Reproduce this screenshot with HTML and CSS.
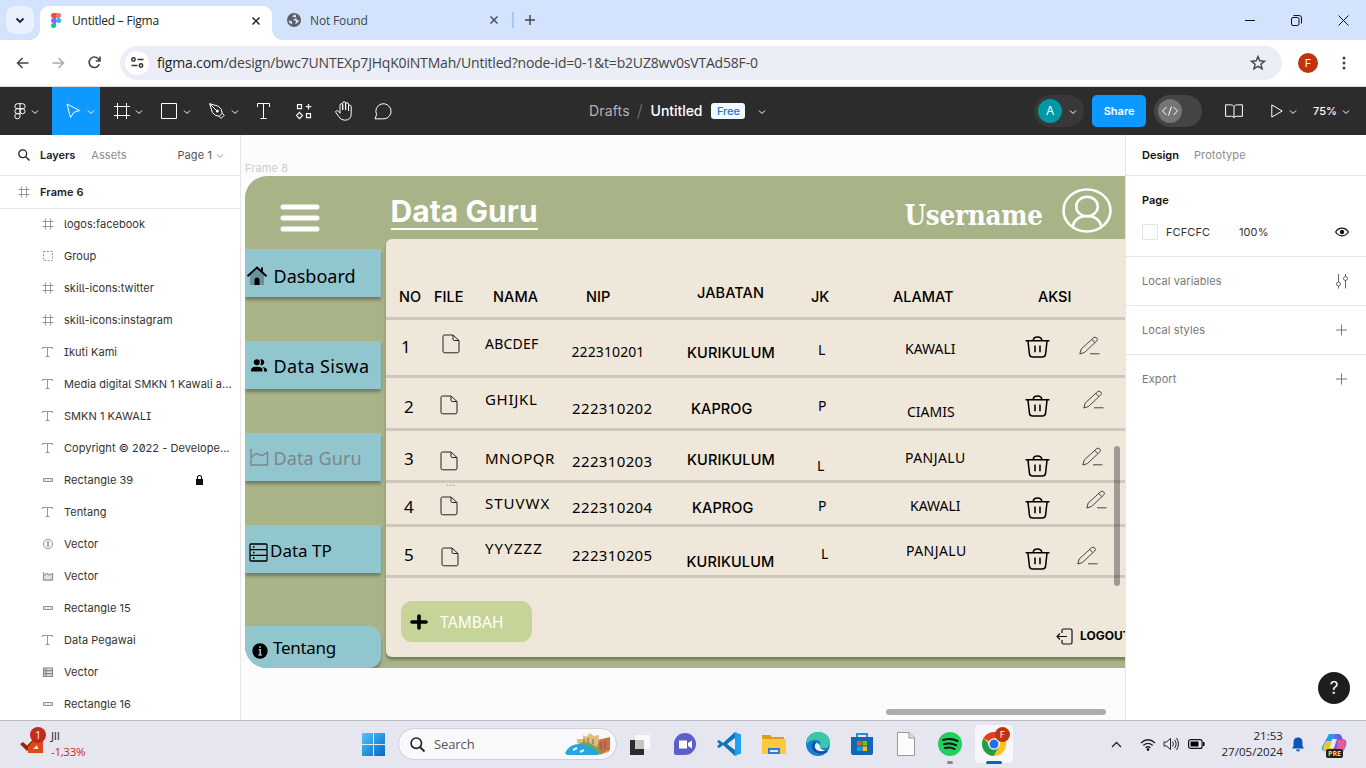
FILE: index.html
```html
<!DOCTYPE html>
<html lang="id">
<head>
<meta charset="utf-8">
<title>Untitled – Figma</title>
<link rel="stylesheet" href="styles.css">
</head>
<body>
<svg class="defs" width="0" height="0">
  <symbol id="caret" viewBox="0 0 8 6"><path d="M1 1.5l3 3 3-3" fill="none" stroke="currentColor"/></symbol>
  <symbol id="hash" viewBox="0 0 12 12"><path d="M3.5 .5v11M8.5 .5v11M.5 3.5h11M.5 8.5h11" fill="none" stroke="currentColor"/></symbol>
  <symbol id="tee" viewBox="0 0 12 12"><path d="M.5 3V1.5h10V3M5.500 1.500v9M3.500 10.500h4" fill="none" stroke="currentColor"/></symbol>
  <symbol id="bar" viewBox="0 0 12 12"><rect x="1.500" y="4.500" width="9" height="3" fill="#e6e6e6" stroke="currentColor"/></symbol>
  <symbol id="file" viewBox="0 0 18 20"><path d="M2.500 1h8.500l6 5.500v10.500q0 1.800-1.800 1.800H2.800Q1 18.800 1 17V2.500Q1 1 2.500 1zM11 1v4.200q0 1.300 1.300 1.300H17" fill="none" stroke="#222" stroke-width="1"/></symbol>
  <symbol id="trash" viewBox="0 0 26 23"><path d="M.5 5h25M8.500 5q0-4 4.500-4t4.500 4M3 5l1.600 14.300Q5 22 8 22h10q3 0 3.400-2.700L23 5M10.400 10v7M15.600 10v7" fill="none" stroke="#000" stroke-width="1.600"/></symbol>
  <symbol id="pencil" viewBox="0 0 21 19"><path d="M.8 18l1.400-5L14.500 1.800q1.600-1.400 3.200.1t.1 3L5.500 16.500zM12.700 3.500l3.200 3M11 17.800h9.500" fill="none" stroke="#333" stroke-width=".9"/></symbol>
  <symbol id="plus" viewBox="0 0 12 12"><path d="M5.500 .5v11M0 6h11" fill="none" stroke="currentColor"/></symbol>
</svg>

<div class="tabstrip">
  <div class="tab-search"><svg width="10" height="7" viewBox="0 0 10 7"><path d="M1.500 1.500L5 5l3.500-3.500" fill="none" stroke="#222" stroke-width="1.800"/></svg></div>
  <div class="tab tab-active">
    <svg width="10" height="15" viewBox="0 0 10 15"><path d="M2.500 0H5v5H2.500a2.500 2.500 0 010-5z" fill="#f24e1e"/><path d="M5 0h2.500a2.500 2.500 0 010 5H5z" fill="#ff7262"/><path d="M2.500 5H5v5H2.500a2.500 2.500 0 010-5z" fill="#a259ff"/><circle cx="7.500" cy="7.500" r="2.500" fill="#1abcfe"/><path d="M2.500 10H5v2.500A2.500 2.500 0 112.500 10z" fill="#0acf83"/></svg>
    <span>Untitled – Figma</span>
    <svg class="close" width="8" height="8" viewBox="0 0 8 8"><path d="M.5.5l7 7M7.500.5l-7 7" stroke="#222" stroke-width="1.500"/></svg>
  </div>
  <div class="tab tab-idle">
    <svg width="14" height="14" viewBox="0 0 14 14"><circle cx="7" cy="7" r="7" fill="#5c6066"/><path d="M8.500 1.500q-3 .5-3 2.500h3v2q-2 0-3 1 3-.2 3.500 1.500l-1 2.500q3.500-.5 4-4-2 .5-2.500-.8zM1.500 7.500q3.500 0 3.500 1.500v2.500Q2 10.500 1.500 7.500z" fill="#d3e3fd"/></svg>
    <span>Not Found</span>
    <svg class="close" width="8" height="8" viewBox="0 0 8 8"><path d="M.5.5l7 7M7.500.5l-7 7" stroke="#444" stroke-width="1.300"/></svg>
  </div>
  <div class="tab-sep"></div>
  <svg class="newtab" width="10" height="10" viewBox="0 0 10 10"><path d="M5 0v10M0 5h10" stroke="#444" stroke-width="1.400"/></svg>
  <div class="winctl">
    <svg width="10" height="10" viewBox="0 0 10 10"><path d="M0 5.500h10" stroke="#111"/></svg>
    <svg width="11" height="11" viewBox="0 0 11 11"><rect x=".5" y="2.500" width="7.500" height="8" rx="1.500" fill="none" stroke="#111"/><path d="M2.500.5H8Q10.500.5 10.500 3v5.500" fill="none" stroke="#111"/></svg>
    <svg width="11" height="11" viewBox="0 0 11 11"><path d="M.5.5l10 10M10.500.5l-10 10" stroke="#111"/></svg>
  </div>
</div>

<div class="navbar">
  <svg class="nav-back" width="13" height="12" viewBox="0 0 13 12"><path d="M12.500 6H1.500M6.500 1l-5 5 5 5" fill="none" stroke="#444" stroke-width="1.500"/></svg>
  <svg class="nav-fwd" width="13" height="12" viewBox="0 0 13 12"><path d="M.5 6h11M6.500 1l5 5-5 5" fill="none" stroke="#aaa" stroke-width="1.500"/></svg>
  <svg class="nav-reload" width="13" height="13" viewBox="0 0 13 13"><path d="M11.300 8A5.200 5.200 0 1110.600 3.200L12 5M12 .5V5H7.800" fill="none" stroke="#444" stroke-width="1.600"/></svg>
  <div class="urlbar">
    <div class="site-info"><svg width="13" height="11" viewBox="0 0 13 11"><path d="M6.500 2.500h6M.5 8.500h6" stroke="#333" stroke-width="1.600"/><circle cx="2.500" cy="2.500" r="1.700" fill="none" stroke="#333" stroke-width="1.500"/><circle cx="10" cy="8.500" r="1.700" fill="none" stroke="#333" stroke-width="1.500"/></svg></div>
    <span class="url"><b>figma.com</b>/design/bwc7UNTEXp7JHqK0iNTMah/Untitled?node-id=0-1&amp;t=b2UZ8wv0sVTAd58F-0</span>
    <svg class="star" width="16" height="15" viewBox="0 0 16 15"><path d="M8 1.500l1.800 4.300 4.700.4-3.600 3 1.200 4.600L8 11.300l-4.100 2.500 1.200-4.600-3.600-3 4.700-.4z" fill="none" stroke="#444" stroke-width="1.400"/></svg>
  </div>
  <div class="profile">F</div>
  <svg class="dots" width="4" height="14" viewBox="0 0 4 14"><circle cx="2" cy="2" r="1.500" fill="#444"/><circle cx="2" cy="7" r="1.500" fill="#444"/><circle cx="2" cy="12" r="1.500" fill="#444"/></svg>
</div>

<div class="toolbar">
  <div class="tool tool-menu"><svg width="12" height="17" viewBox="0 0 12 17"><path d="M6 .7v12.500a2.600 2.600 0 11-2.600-2.600H6M6 .7H3.400a2.500 2.500 0 000 5H6M6 .7h2.600a2.500 2.500 0 010 5H6M6 5.700H3.400a2.500 2.500 0 000 5H6" fill="none" stroke="#fff"/><circle cx="8.600" cy="8.200" r="2.500" fill="none" stroke="#fff"/></svg><svg class="caret" width="8" height="6"><use href="#caret"/></svg></div>
  <div class="tool tool-on"><svg width="15" height="16" viewBox="0 0 15 16"><path d="M1 1l12.500 6.500-5.700 1.900L4.500 14.500z" fill="none" stroke="#fff"/></svg><svg class="caret" width="8" height="6"><use href="#caret"/></svg></div>
  <div class="tool"><svg width="16" height="16" viewBox="0 0 16 16"><path d="M3.500 0v16M12.500 0v16M0 3.500h16M0 12.500h16" stroke="#fff"/></svg><svg class="caret" width="8" height="6"><use href="#caret"/></svg></div>
  <div class="tool tool-rect"><svg width="16" height="16" viewBox="0 0 16 16"><path d="M.5.5h15v15H.5z" fill="none" stroke="#fff"/></svg><svg class="caret" width="8" height="6"><use href="#caret"/></svg></div>
  <div class="tool tool-rect"><svg width="16" height="16" viewBox="0 0 16 16"><path d="M.7.7l8.800 2.600q3.700 2.600 3.700 7l2 2-3 3-2-2q-4.500-.2-6.800-3.800zM.7.7l6.500 6.500M9.500 14l4-4" fill="none" stroke="#fff"/><circle cx="8.300" cy="8" r="1.500" fill="#fff"/></svg><svg class="caret" width="8" height="6"><use href="#caret"/></svg></div>
  <div class="tool tool-single"><svg width="14" height="16" viewBox="0 0 14 16"><path d="M.5 4V.5h12V4M6.500.5v15M3.500 15.500h6" fill="none" stroke="#fff"/></svg></div>
  <div class="tool tool-single"><svg width="15" height="15" viewBox="0 0 15 15"><path d="M1.500.7h4v4h-4zM10.500 9.700h4v4h-4zM12.500 0v5.500M9.800 2.700h5.500M3.500 8.300L6.500 11.500 3.500 14.700.5 11.500z" fill="none" stroke="#fff" stroke-width="1.200"/></svg></div>
  <div class="tool tool-single"><svg width="18" height="20" viewBox="0 0 18 20"><path d="M5 11V4.200q0-1.500 1.300-1.500T7.700 4.200V9 2.300q0-1.600 1.400-1.600t1.500 1.600V9 3.200q0-1.500 1.400-1.500t1.500 1.500V10 5.500q0-1.400 1.300-1.400t1.400 1.400v7.200q0 6.500-6.500 6.500-4 0-5.800-3.500L.9 11.500q-.7-1.500.7-1.800 1.200-.2 2.200 1L5 12.200z" fill="none" stroke="#fff"/></svg></div>
  <div class="tool tool-single"><svg width="19" height="17" viewBox="0 0 19 17"><path d="M1 15.800l1.600-4.200A7.600 7.600 0 1110 15.900z" fill="none" stroke="#fff"/></svg></div>
  <div class="doc"><span class="drafts">Drafts</span><span class="slash">/</span><span class="docname">Untitled</span><span class="free">Free</span><svg class="caret" width="8" height="6"><use href="#caret"/></svg></div>
  <div class="actions">
    <div class="avatar-pill"><span class="avatar">A</span><svg class="caret" width="8" height="6"><use href="#caret"/></svg></div>
    <div class="share">Share</div>
    <div class="devmode"><span><svg width="16" height="10" viewBox="0 0 16 10"><path d="M4.500 1l-4 4 4 4M11.500 1l4 4-4 4M9.500.5l-3 9" fill="none" stroke="#fff"/></svg></span></div>
    <svg class="book" width="18" height="14" viewBox="0 0 18 14"><path d="M9 2.500Q8 .8 5.500.8H.6v11.500h5.900q1.500 0 2.500 1.200 1-1.200 2.500-1.200h5.900V.8h-4.900Q10 .8 9 2.500zv11" fill="none" stroke="#fff"/></svg>
    <svg class="play" width="12" height="14" viewBox="0 0 12 14"><path d="M.8.9v12.200L11.200 7z" fill="none" stroke="#fff"/></svg>
    <svg class="caret play-caret" width="8" height="6"><use href="#caret"/></svg>
    <span class="zoom">75%</span><svg class="caret" width="8" height="6"><use href="#caret"/></svg>
  </div>
</div>

<div class="workspace">
  <div class="layers">
    <div class="layers-head"><svg width="12" height="12" viewBox="0 0 12 12"><circle cx="4.700" cy="4.700" r="3.900" fill="none" stroke="#222" stroke-width="1.300"/><path d="M7.700 7.700l3.800 3.800" stroke="#222" stroke-width="1.400"/></svg><b>Layers</b><span class="assets">Assets</span><span class="pagename">Page 1</span><svg class="caret" width="8" height="6"><use href="#caret"/></svg></div>
    <div class="layer layer-root"><svg width="12" height="12"><use href="#hash"/></svg><b>Frame 6</b></div>
    <div class="layer"><svg width="12" height="12"><use href="#hash"/></svg><span>logos:facebook</span></div>
    <div class="layer"><svg width="12" height="12" viewBox="0 0 12 12"><path d="M1.500 1.500h9v9h-9z" fill="none" stroke="currentColor" stroke-dasharray="2 1.500"/></svg><span>Group</span></div>
    <div class="layer"><svg width="12" height="12"><use href="#hash"/></svg><span>skill-icons:twitter</span></div>
    <div class="layer"><svg width="12" height="12"><use href="#hash"/></svg><span>skill-icons:instagram</span></div>
    <div class="layer"><svg width="12" height="12"><use href="#tee"/></svg><span>Ikuti Kami</span></div>
    <div class="layer"><svg width="12" height="12"><use href="#tee"/></svg><span>Media digital SMKN 1 Kawali a...</span></div>
    <div class="layer"><svg width="12" height="12"><use href="#tee"/></svg><span>SMKN 1 KAWALI</span></div>
    <div class="layer"><svg width="12" height="12"><use href="#tee"/></svg><span>Copyright © 2022 - Develope...</span></div>
    <div class="layer"><svg width="12" height="12"><use href="#bar"/></svg><span>Rectangle 39</span><svg class="lock" width="7" height="10" viewBox="0 0 7 10"><path d="M0 4h7v6H0z" fill="#111"/><path d="M1.500 5V2.500a2 2 0 014 0V5" fill="none" stroke="#111" stroke-width="1.100"/></svg></div>
    <div class="layer"><svg width="12" height="12"><use href="#tee"/></svg><span>Tentang</span></div>
    <div class="layer"><svg width="12" height="12" viewBox="0 0 12 12"><circle cx="6" cy="6" r="4.700" fill="#f2f2f2" stroke="currentColor"/><path d="M6 3v6" stroke="currentColor" stroke-width="1.500"/></svg><span>Vector</span></div>
    <div class="layer"><svg width="12" height="12" viewBox="0 0 12 12"><path d="M1.500 2v8h9V3.500L7.500 5 5 3.500 2 5.500" fill="#e2e2e2" stroke="#999" stroke-width="1.300"/></svg><span>Vector</span></div>
    <div class="layer"><svg width="12" height="12"><use href="#bar"/></svg><span>Rectangle 15</span></div>
    <div class="layer"><svg width="12" height="12"><use href="#tee"/></svg><span>Data Pegawai</span></div>
    <div class="layer"><svg width="12" height="12" viewBox="0 0 12 12"><path d="M1.500 2h9v8.500h-9zM1.500 4.700h9M1.500 7.700h9M4 2v8.500" fill="#ddd" stroke="#888" stroke-width="1.200"/></svg><span>Vector</span></div>
    <div class="layer"><svg width="12" height="12"><use href="#bar"/></svg><span>Rectangle 16</span></div>
  </div>

  <div class="canvas">
    <div class="frame-label">Frame 8</div>
    <div class="frame">
      <svg class="burger" width="40" height="28" viewBox="0 0 40 28"><path d="M3 3h34M3 14h34M3 25h34" stroke="#fff" stroke-width="5" stroke-linecap="round"/></svg>
      <div class="title">Data Guru</div>
      <div class="username">Username</div>
      <svg class="user" width="50" height="45" viewBox="0 0 50 45"><g fill="none" stroke="#fff" stroke-width="2.600"><ellipse cx="25" cy="22.500" rx="23.500" ry="21"/><ellipse cx="25" cy="18.500" rx="10.800" ry="9.700"/><path d="M10.500 39Q13 28 25 28t14.500 11"/></g></svg>

      <div class="menu menu-1"><svg width="20" height="20" viewBox="0 0 20 20"><path d="M3 9l7-6 7 6v10H3z" fill="#6d9199"/><path d="M.5 10.200L10 1.500l9.500 8.700M15 1.500v4" fill="none" stroke="#000" stroke-width="1.900"/><path d="M7.500 19v-5a2.500 2.500 0 015 0v5z"/></svg><span>Dasboard</span></div>
      <div class="menu menu-2"><svg width="16" height="13" viewBox="0 0 16 13"><circle cx="5.800" cy="3.200" r="3"/><path d="M0 12.500V11q0-3.300 5.800-3.300T11.500 11v1.500zM9.300.4a3 3 0 110 5.700q1.500-2.700 0-5.700zM11.300 8q4.700.5 4.700 3v1.500h-3V11q0-1.800-1.700-3z"/></svg><span>Data Siswa</span></div>
      <div class="menu menu-3"><svg width="19" height="17" viewBox="0 0 19 17"><path d="M1 0v16h16.500V3.500L12 6.700 6 4.500 1 8.500" fill="none" stroke="#7d868a" stroke-width="1.400"/></svg><span>Data Guru</span></div>
      <div class="menu menu-4"><svg width="19" height="19" viewBox="0 0 19 19"><rect x="1" y="1" width="17" height="17" rx="1" fill="none" stroke="#000" stroke-width="1.300"/><path d="M1 6.700h17M1 12.300h17" fill="none" stroke="#000" stroke-width="1.200"/><path d="M4 3h1.500v1.700H4zM4 8.700h1.500v1.700H4zM4 14.300h1.500V16H4z"/></svg><span>Data TP</span></div>
      <div class="menu menu-5"><svg width="16" height="16" viewBox="0 0 16 16"><circle cx="8" cy="8" r="7.700"/><path d="M8 3.200v1.800M6.700 6.800H8.200v5M6.500 12h3.300" fill="none" stroke="#92c6cf" stroke-width="1.500"/></svg><span>Tentang</span></div>

      <div class="sheet">
        <div class="row head"><span class="no">NO</span><span class="fl">FILE</span><span class="nama">NAMA</span><span class="nip">NIP</span><span class="jab">JABATAN</span><span class="jk">JK</span><span class="alm">ALAMAT</span><span class="aksi">AKSI</span></div>
        <div class="row r1"><span class="no">1</span><svg class="fl"><use href="#file"/></svg><span class="nama">ABCDEF</span><span class="nip">222310201</span><span class="jab">KURIKULUM</span><span class="jk">L</span><span class="alm">KAWALI</span><svg class="del"><use href="#trash"/></svg><svg class="edit"><use href="#pencil"/></svg></div>
        <div class="row r2"><span class="no">2</span><svg class="fl"><use href="#file"/></svg><span class="nama">GHIJKL</span><span class="nip">222310202</span><span class="jab">KAPROG</span><span class="jk">P</span><span class="alm">CIAMIS</span><svg class="del"><use href="#trash"/></svg><svg class="edit"><use href="#pencil"/></svg></div>
        <div class="row r3"><span class="no">3</span><svg class="fl"><use href="#file"/></svg><span class="nama">MNOPQR</span><span class="nip">222310203</span><span class="jab">KURIKULUM</span><span class="jk">L</span><span class="alm">PANJALU</span><svg class="del"><use href="#trash"/></svg><svg class="edit"><use href="#pencil"/></svg></div>
        <div class="row r4"><span class="more">...</span><span class="no">4</span><svg class="fl"><use href="#file"/></svg><span class="nama">STUVWX</span><span class="nip">222310204</span><span class="jab">KAPROG</span><span class="jk">P</span><span class="alm">KAWALI</span><svg class="del"><use href="#trash"/></svg><svg class="edit"><use href="#pencil"/></svg></div>
        <div class="row r5"><span class="no">5</span><svg class="fl"><use href="#file"/></svg><span class="nama">YYYZZZ</span><span class="nip">222310205</span><span class="jab">KURIKULUM</span><span class="jk">L</span><span class="alm">PANJALU</span><svg class="del"><use href="#trash"/></svg><svg class="edit"><use href="#pencil"/></svg></div>
        <div class="tambah"><svg width="18" height="16" viewBox="0 0 18 16"><path d="M9 2v12M2 8h14" stroke="#000" stroke-width="3.600" stroke-linecap="round"/></svg><span>TAMBAH</span></div>
        <div class="logout"><svg width="17" height="17" viewBox="0 0 17 17"><path d="M6 5V2.500Q6 1 7.500 1h7Q16 1 16 2.500v12q0 1.500-1.500 1.500h-7Q6 16 6 14.500V12M11 8.500H1M4 5.500l-3 3 3 3" fill="none" stroke="#111" stroke-width="1.200"/></svg><span>LOGOUT</span></div>
      </div>
    </div>
    <div class="scroll-v"></div>
    <div class="scroll-h"></div>
  </div>

  <div class="props">
    <div class="props-tabs"><b>Design</b><span>Prototype</span></div>
    <div class="page-section">
      <b>Page</b>
      <div class="fill"><i></i><span class="hex">FCFCFC</span><span>100%</span><svg width="14" height="10" viewBox="0 0 14 10"><path d="M.6 5Q3 1.200 7 1.200T13.400 5Q11 8.800 7 8.800T.6 5z" fill="none" stroke="#111" stroke-width="1.200"/><circle cx="7" cy="5" r="2.200" fill="#111"/></svg></div>
    </div>
    <div class="prop"><span>Local variables</span><svg width="13" height="15" viewBox="0 0 13 15"><path d="M3.500 0v8M3.500 12v2.500M10.500 0v2.500M10.500 6.500v8" stroke="#666"/><circle cx="3.500" cy="10" r="2" fill="none" stroke="#666"/><circle cx="10.500" cy="4.500" r="2" fill="none" stroke="#666"/></svg></div>
    <div class="prop"><span>Local styles</span><svg width="12" height="12"><use href="#plus"/></svg></div>
    <div class="prop prop-last"><span>Export</span><svg width="12" height="12"><use href="#plus"/></svg></div>
    <div class="help">?</div>
  </div>
</div>

<div class="taskbar">
  <div class="widget">
    <div class="widget-icon"><svg width="26" height="24" viewBox="0 0 26 24"><path d="M1 12l3-2 4 3.500 6-6v5L8 19z" fill="#8c2a12"/><path d="M9 21v-6l5-6h10v12z" fill="#e04a12"/><path d="M14 17l4-4 1.500 4z" fill="#f6e4df"/></svg><span>1</span></div>
    <div class="widget-text"><span>JII</span><span class="down">-1,33%</span></div>
  </div>
  <svg class="start" width="23" height="23" viewBox="0 0 23 23"><defs><linearGradient id="w" x1="0" y1="0" x2="1" y2="1"><stop offset="0" stop-color="#4cc8fb"/><stop offset="1" stop-color="#0468c8"/></linearGradient></defs><path d="M0 0h11v11H0zM12 0h11v11H12zM0 12h11v11H0zM12 12h11v11H12z" fill="url(#w)"/></svg>
  <div class="searchbox"><svg width="15" height="15" viewBox="0 0 15 15"><circle cx="6.300" cy="6.200" r="5.200" fill="none" stroke="#222" stroke-width="1.600"/><path d="M10 10l4.500 4.500" stroke="#222" stroke-width="1.800"/></svg><span>Search</span>
    <svg class="city" width="46" height="22" viewBox="0 0 46 22"><path d="M12 10V6h6V2l3 2 4-4 4 3 5-1v4l10-1v14l-9 3-16-10z" fill="#e0bd7c"/><path d="M34 7l11-3v13l-9 4-4-6z" fill="#c7704c"/><path d="M36 9v8M40 8v8M19 6v4M23 5v5M28 6v5" stroke="#8d5d3a"/><path d="M13 11q8-4 14 0l9 6v4H20z" fill="#7aa353"/><path d="M0 20q4-9 15-9 12 0 19 11H2z" fill="#27a5dc"/><path d="M8 17l4-2M15 19l4-2" stroke="#e6f6fb" stroke-width="2"/></svg>
  </div>
  <div class="apps">
    <svg width="26" height="26" viewBox="0 0 26 26"><path d="M2 9h14v15H2z" fill="#2b2b2b"/><path d="M7 4h15v14H7z" fill="#fff" opacity=".72"/></svg>
    <svg width="26" height="26" viewBox="0 0 26 26"><path d="M2 23V13a11 11 0 1111 11H4z" fill="#5b5fc7"/><path d="M7 9.500h8v8H7zM16 12l4-2.500v8L16 15z" fill="#fff"/></svg>
    <svg width="26" height="26" viewBox="0 0 26 26"><path d="M19 1l6 2.500v19L19 25z" fill="#21a0ef"/><path d="M19 1L7 12 3 9 1 10.500 3.500 13 1 15.500 3 17l4-3 12 11v-6l-8-6 8-6z" fill="#0b75bd"/></svg>
    <svg width="26" height="26" viewBox="0 0 26 26"><path d="M1 4h8l2 2h12v5H1z" fill="#e09b18"/><path d="M1 8h24v15H1z" fill="#fcc93f"/><path d="M7 17h12v6H7z" fill="#2a7fd0"/><path d="M9 20h8" stroke="#d9edff" stroke-width="2"/></svg>
    <svg width="26" height="26" viewBox="0 0 26 26"><circle cx="13" cy="13" r="12" fill="#1580cf"/><path d="M2 9Q5 1 13 1q11 0 12 10 0 6-6 6-4 0-4-2 2-5-3-6-6-1-10 4z" fill="#3cc7a6"/><path d="M15 15q-1-3-4-3-3 4 0 8 5 3 11 0-7-1-7-5z" fill="#e6f2fa"/><path d="M10 11q-4 5 1 9 5 3 11 0" fill="none" stroke="#0c4f9c" stroke-width="2.500"/></svg>
    <svg width="26" height="26" viewBox="0 0 26 26"><path d="M8 7V3h10v4" fill="none" stroke="#2b8bdb" stroke-width="2"/><path d="M2 6h22v16q0 2-2 2H4q-2 0-2-2z" fill="#1167b1"/><path d="M8 10h4.500v4.500H8z" fill="#f35325"/><path d="M13.500 10H18v4.500h-4.500z" fill="#81bc06"/><path d="M8 15.500h4.500V20H8z" fill="#05a6f0"/><path d="M13.500 15.500H18V20h-4.500z" fill="#ffba08"/></svg>
    <svg width="26" height="26" viewBox="0 0 26 26"><path d="M4.500 1.500H16l5.500 5.500v17.500h-17z" fill="#fbfbfb" stroke="#999"/><path d="M16 1.500V7h5.500" fill="#ddd" stroke="#999"/></svg>
    <div class="app-running"><svg width="26" height="26" viewBox="0 0 26 26"><circle cx="13" cy="13" r="12" fill="#1fd05f"/><path d="M6 9q8-2.500 14.500 1M7 13.200q6.500-2 12 1M8 17q5-1.500 9.500 1" fill="none" stroke="#111" stroke-width="2" stroke-linecap="round"/></svg></div>
    <div class="app-active"><svg width="26" height="26" viewBox="0 0 26 26"><circle cx="13" cy="13" r="12" fill="#fbc116"/><path d="M13 13L2.600 7A12 12 0 0123.400 7H13z" fill="#e33b2e"/><path d="M2.600 7A12 12 0 0012.500 25l5.500-9.500-5-2.500-4 2z" fill="#229d4c"/><circle cx="13" cy="13" r="5.800" fill="#fff"/><circle cx="13" cy="13" r="4.500" fill="#1a73e8"/></svg><span>F</span></div>
  </div>
  <div class="tray">
    <svg class="up" width="11" height="7" viewBox="0 0 11 7"><path d="M1 6l4.500-4.500L10 6" fill="none" stroke="#222" stroke-width="1.300"/></svg>
    <svg class="wifi" width="16" height="13" viewBox="0 0 16 13"><path d="M1 5q7-6.500 14 0M3.300 7.500q4.700-4.300 9.400 0M5.500 9.800q2.500-2.200 5 0" fill="none" stroke="#222" stroke-width="1.300"/><circle cx="8" cy="11.500" r="1.300"/></svg>
    <svg class="sound" width="16" height="14" viewBox="0 0 16 14"><path d="M1 5h2.500L7.500 1.500v11L3.500 9H1zM9.500 4.500q2 2.500 0 5M11.500 2.800q3.300 4.200 0 8.400M13.500 1q4 6 0 12" fill="none" stroke="#222"/></svg>
    <svg class="batt" width="17" height="10" viewBox="0 0 17 10"><rect x=".6" y=".6" width="13.500" height="8.800" rx="2" fill="none" stroke="#111" stroke-width="1.200"/><path d="M2.500 2.500h8v5h-8zM15 3h1.500v4H15z"/></svg>
    <div class="clock"><span>21:53</span><span>27/05/2024</span></div>
    <svg class="bell" width="14" height="15" viewBox="0 0 14 15"><path d="M1 11.500l1.500-2.500V5.500Q2.500.5 7 .5t4.500 5V9l1.500 2.500zM5 12.500h4q-.3 2-2 2t-2-2z" fill="#0b57b8"/></svg>
    <div class="copilot"><svg width="26" height="25" viewBox="0 0 26 25"><path d="M8 2h8l3 7-5 10H4q-4 0-3-4z" fill="#2b9be6"/><path d="M3 13q-3 6 3 7h6l3-11H5z" fill="#e7c83a"/><path d="M14 2h4q3 1 3.500 5l3 1q2 3-.500 8l-4 6h-8z" fill="#6f5be0"/><path d="M17 8h6q3 1 1 7l-2 5h-7z" fill="#e0609a"/><path d="M11 7h5l-3 9h-4z" fill="#e6e6f0"/></svg><span>PRE</span></div>
  </div>
</div>
</body>
</html>
```

FILE: styles.css
```css
* { box-sizing: border-box; }
body { margin: 0; width: 1366px; height: 768px; overflow: hidden; display: flex; flex-direction: column; font-family: Inter, sans-serif; background: #fff; }
svg { display: block; flex: none; overflow: visible; }
.defs { position: absolute; }
b { font-weight: 600; }

/* browser tabs */
.tabstrip { height: 40px; flex: none; display: flex; align-items: center; background: #d3e3fd; font: 12px "Open Sans", sans-serif; color: #333; }
.tab-search { width: 28px; height: 28px; margin: 0 6px; border-radius: 9px; background: #eaf1fe; display: flex; align-items: center; justify-content: center; }
.tab { display: flex; align-items: center; }
.tab-active { position: relative; width: 232px; height: 34px; align-self: flex-end; padding: 0 12px 5px 11px; background: #fff; border-radius: 9px 9px 0 0; color: #222; }
.tab-active::before, .tab-active::after { content: ""; position: absolute; bottom: 0; width: 10px; height: 10px; }
.tab-active::before { left: -10px; background: radial-gradient(circle at 0 0, transparent 9.500px, #fff 10px); }
.tab-active::after { right: -10px; background: radial-gradient(circle at 100% 0, transparent 9.500px, #fff 10px); }
.tab-active span { margin-left: 11px; letter-spacing: -.23px; }
.tab .close { margin-left: auto; }
.tab-idle { width: 226px; padding-left: 15px; color: #444; }
.tab-idle span { margin-left: 9px; letter-spacing: -.15px; }
.tab-sep { width: 2px; height: 16px; margin-left: 14px; background: #a8c7fa; }
.newtab { margin-left: 11px; }
.winctl { margin-left: auto; display: flex; align-items: center; gap: 36px; padding-right: 17px; }

/* address row */
.navbar { height: 47px; flex: none; display: flex; align-items: center; padding-bottom: 1px; border-bottom: 1px solid #dcdcdc; }
.nav-back { margin-left: 16px; }
.nav-fwd { margin-left: 23px; }
.nav-reload { margin-left: 23px; }
.urlbar { width: 1162px; height: 34px; margin-left: 19px; padding: 0 16px 0 5px; border-radius: 17px; background: #ebeef7; display: flex; align-items: center; }
.site-info { width: 24px; height: 24px; border-radius: 12px; background: #fff; display: flex; align-items: center; justify-content: center; }
.url { margin-left: 8px; font: 14px "Open Sans", sans-serif; color: #444; letter-spacing: -.19px; white-space: nowrap; }
.url b { font-weight: 400; color: #1f1f1f; }
.star { margin-left: auto; }
.profile { width: 20px; height: 20px; margin-left: 16px; border-radius: 10px; background: #c0330c; color: #fff; font-size: 11px; line-height: 20px; text-align: center; }
.dots { margin-left: 24px; }

/* editor toolbar */
.toolbar { height: 48px; flex: none; display: flex; align-items: center; background: #2c2c2c; color: #fff; }
.caret { color: #fff; margin-top: 2px; }
.tool { width: 48px; height: 48px; display: flex; align-items: center; padding-left: 14px; }
.tool .caret { margin-left: auto; margin-right: 5px; }
.tool-rect { padding-left: 13px; }
.tool-menu { width: 52px; }
.tool-menu .caret { margin-right: 13px; }
.tool-on { background: #0d99ff; }
.tool-single { width: 40px; padding: 0 1px 0 0; justify-content: center; }
.doc { margin-left: 185px; display: flex; align-items: center; font-size: 14px; padding-bottom: 1px; }
.drafts { color: #b3b3b3; letter-spacing: .15px; }
.slash { margin: 0 8px 0 7px; color: #777; font-size: 17px; font-weight: 300; }
.docname { font-weight: 500; letter-spacing: -.05px; }
.free { width: 34px; height: 16px; margin: 0 13px 0 9px; border-radius: 3px; background: #f2f9ff; color: #1878dd; font-size: 11px; font-weight: 500; line-height: 16px; text-align: center; }
.actions { margin-left: auto; display: flex; align-items: center; padding-right: 16px; }
.avatar-pill { width: 50px; height: 32px; margin-right: 8px; padding: 0 7px 0 4px; border-radius: 16px; background: #383838; display: flex; align-items: center; justify-content: space-between; }
.avatar { width: 24px; height: 24px; border-radius: 12px; background: #0097a7; font-size: 12px; line-height: 24px; text-align: center; }
.share { width: 54px; height: 32px; border-radius: 5px; background: #0d99ff; font-size: 11px; font-weight: 600; line-height: 32px; text-align: center; }
.devmode { width: 48px; height: 32px; margin-left: 8px; padding: 4px; border-radius: 16px; background: #444; }
.devmode span { width: 24px; height: 24px; border-radius: 12px; background: #757575; display: flex; align-items: center; justify-content: center; }
.book { margin-left: 23px; }
.play { margin-left: 28px; }
.play-caret { margin-left: 6px; }
.zoom { margin: 0 5px 0 16px; font-size: 11px; font-weight: 500; }

/* layer list */
.workspace { height: 585px; flex: none; display: flex; }
.layers { width: 241px; flex: none; border-right: 1px solid #e5e5e5; background: #fff; font-size: 11px; color: #333; overflow: hidden; }
.layers-head { height: 41px; display: flex; align-items: center; padding-left: 18px; border-bottom: 1px solid #e5e5e5; }
.layers-head b { margin-left: 10px; color: #222; letter-spacing: -.05px; }
.assets { margin-left: 16px; color: #8c8c8c; letter-spacing: .1px; }
.pagename { margin-left: auto; margin-right: 4px; color: #555; letter-spacing: .1px; }
.layers-head .caret { color: #999; margin-right: 16px; }
.layer { height: 32px; display: flex; align-items: center; gap: 10px; padding: 0 0 2px 42px; color: #999; font-feature-settings: "ss02"; white-space: nowrap; }
.layer span { color: #333; letter-spacing: .04px; }
.layer-root { height: 33px; padding: 0 0 0 18px; border-bottom: 1px solid #e5e5e5; }
.layer-root b { color: #222; letter-spacing: .1px; }
.lock { margin-left: auto; margin-right: 37px; }

/* canvas: the drawing's nodes sit at their own coordinates */
.canvas { width: 884px; flex: none; position: relative; overflow: hidden; background: #fcfcfc; }
.frame-label { position: absolute; left: 4px; top: 26px; font-size: 11px; line-height: 14px; letter-spacing: .1px; color: #ccc; }
.frame { position: absolute; left: 3.500px; top: 41px; width: 900px; height: 492px; border-radius: 22px; background: #a8b387; overflow: hidden; }
.burger { position: absolute; left: 35.500px; top: 27.500px; }
.title { position: absolute; left: 146px; top: 17px; height: 37px; border-bottom: 2px solid #fff; color: #fff; font-size: 30px; font-weight: 700; line-height: 36px; letter-spacing: .05px; white-space: nowrap; }
.username { position: absolute; left: 660px; top: 21px; color: #fff; font: 700 27.500px/36px "DejaVu Serif Condensed", "DejaVu Serif", serif; font-stretch: condensed; letter-spacing: -.25px; }
.user { position: absolute; left: 817.500px; top: 12px; }
.menu { position: absolute; left: 0; width: 136.500px; height: 48px; background: #92c6cf; box-shadow: 0 3px 3px rgba(0,0,0,.3); display: flex; align-items: center; font: 18px "Noto Sans", sans-serif; color: #000; white-space: nowrap; }
.menu-1 { top: 73px; padding-left: 2px; gap: 7px; }
.menu-1 span { padding-top: 6px; }
.menu-1 svg { margin-top: 5px; }
.menu-2 { top: 165px; padding-left: 6px; gap: 7px; letter-spacing: .4px; }
.menu-2 span { padding-top: 2px; }
.menu-3 { top: 257px; padding-left: 5px; gap: 5px; color: #7d868a; letter-spacing: .1px; }
.menu-3 span { padding-top: 1px; }
.menu-4 { top: 349px; padding-left: 4.500px; gap: 2px; font-size: 17px; }
.menu-4 svg { margin-top: 6px; }
.menu-4 span { padding-top: 3px; }
.menu-5 { top: 450px; height: 42px; padding-left: 7.500px; gap: 5px; border-radius: 0 12px 12px 0; font-size: 17px; letter-spacing: -.3px; }
.menu-5 svg { margin-top: 7px; }
.menu-5 span { padding-top: 1px; }
.sheet { position: absolute; left: 141px; top: 63px; width: 770px; height: 418px; border-radius: 6px; background: #efe7da; box-shadow: 0 3px 3px rgba(0,0,0,.3); }
.row { position: relative; border-bottom: 3.500px solid #cdc8be; font: 15px/20px "Noto Sans", sans-serif; color: #000; white-space: nowrap; }
.row > * { position: absolute; }
.row > span { margin-left: .5px; }
.row svg.fl { width: 18px; height: 20px; margin-left: -.5px; }
.del { left: 640px; width: 25px; height: 22px; margin-left: -.5px; }
.edit { width: 21px; height: 19px; margin-left: -.8px; }
.row .jab { font-family: Inter, sans-serif; font-weight: 500; font-size: 14.500px; letter-spacing: .1px; }
.row .no { font-size: 17px; }
.head { height: 81px; }
.row.head span { font: 500 14.500px/20px Inter, sans-serif; top: 48px; }
.head .no { left: 13px; }
.head .fl { left: 48px; }
.head .nama { left: 107px; }
.head .nip { left: 200px; }
.row.head .jab { left: 311px; top: 44px; }
.head .jk { left: 425px; }
.head .alm { left: 507px; }
.head .aksi { left: 652px; }
.nama { letter-spacing: .7px; }
.row .nip { letter-spacing: .36px; }
.head .nama, .row.head .nip, .row.r1 .nip { letter-spacing: .1px; }
.r1 { height: 58px; }
.r1 .no { left: 15px; top: 17px; }
.r1 .fl { left: 57px; top: 14px; }
.r1 .nama { left: 99px; top: 14px; font-size: 14px; letter-spacing: .2px; }
.r1 .nip { left: 185.500px; top: 22px; font-size: 14px; }
.r1 .jab { left: 301px; top: 23px; }
.r1 .jk { left: 432px; top: 20px; font-size: 14px; }
.r1 .alm { left: 519px; top: 19px; font-size: 14px; }
.r1 .del { top: 15.500px; }
.r1 .edit { left: 694px; top: 16px; }
.r2 { height: 53px; }
.r2 .no { left: 18px; top: 19px; }
.r2 .fl { left: 55px; top: 17px; }
.r2 .nama { left: 99px; top: 11px; }
.r2 .nip { left: 186px; top: 20px; }
.r2 .jab { left: 305px; top: 21px; }
.r2 .jk { left: 432px; top: 18px; font-size: 14px; }
.r2 .alm { left: 521px; top: 24px; font-size: 14px; }
.r2 .del { top: 17px; }
.r2 .edit { left: 698px; top: 11.500px; }
.r3 { height: 52px; }
.r3 .no { left: 18px; top: 18px; }
.r3 .fl { left: 55px; top: 20px; }
.r3 .nama { left: 99px; top: 17px; letter-spacing: .5px; }
.r3 .nip { left: 186px; top: 20px; }
.r3 .jab { left: 301px; top: 19px; }
.r3 .jk { left: 431px; top: 24.500px; font-size: 14px; }
.r3 .alm { left: 519px; top: 17px; font-size: 14px; letter-spacing: .45px; }
.r3 .del { top: 23.500px; }
.r3 .edit { left: 697px; top: 16px; }
.r4 { height: 44px; }
.r4 .more { left: 60px; top: -11px; color: #aaa; font-size: 11px; }
.r4 .no { left: 18px; top: 14px; }
.r4 .fl { left: 55px; top: 13px; }
.r4 .nama { left: 99px; top: 10px; letter-spacing: 1px; }
.r4 .nip { left: 186px; top: 14px; }
.r4 .jab { left: 306px; top: 15px; }
.r4 .jk { left: 432px; top: 13px; font-size: 14px; }
.r4 .alm { left: 524px; top: 13px; font-size: 14px; }
.r4 .del { top: 13.500px; }
.r4 .edit { left: 701px; top: 7px; }
.r5 { height: 51px; }
.r5 .no { left: 18px; top: 18px; }
.r5 .fl { left: 56px; top: 20px; }
.r5 .nama { left: 99px; top: 11px; letter-spacing: 1.100px; }
.r5 .nip { left: 186px; top: 18px; }
.r5 .jab { left: 300.500px; top: 25px; }
.r5 .jk { left: 435px; top: 17px; font-size: 14px; }
.r5 .alm { left: 520px; top: 14px; font-size: 14px; letter-spacing: .45px; }
.r5 .del { top: 20.500px; }
.r5 .edit { left: 692px; top: 19px; }
.tambah { position: absolute; left: 15.500px; top: 362px; width: 131px; height: 41px; border-radius: 11px; background: #c6d399; display: flex; align-items: center; padding-left: 9px; gap: 12px; color: #fff; font: 15.500px "Noto Sans", sans-serif; letter-spacing: .1px; }
.logout { position: absolute; left: 670px; top: 389px; display: flex; gap: 7.500px; font-size: 12px; font-weight: 700; line-height: 16px; }
.scroll-v { position: absolute; left: 873px; top: 311px; width: 6px; height: 140px; border-radius: 3px; background: rgba(0,0,0,.33); }
.scroll-h { position: absolute; left: 645px; top: 574px; width: 220px; height: 6px; border-radius: 3px; background: #adadad; }

/* properties */
.props { flex: 1; position: relative; border-left: 1px solid #e5e5e5; background: #fff; font-size: 11px; color: #333; }
.props b { color: #111; }
.props-tabs { height: 41px; display: flex; align-items: center; gap: 15px; padding-left: 16px; border-bottom: 1px solid #e5e5e5; }
.props-tabs span { color: #8c8c8c; letter-spacing: .1px; }
.page-section { height: 81px; padding: 16px 16px 0; border-bottom: 1px solid #e5e5e5; line-height: 16px; }
.fill { display: flex; align-items: center; margin-top: 16px; height: 16px; letter-spacing: .1px; }
.fill i { width: 16px; height: 16px; margin-right: 8px; background: #fcfcfc; border: 1px solid #e6e6e6; }
.hex { width: 73px; }
.fill svg { margin-left: auto; margin-right: 1px; }
.prop { height: 49px; display: flex; align-items: center; justify-content: space-between; padding: 0 18px 0 16px; border-bottom: 1px solid #e5e5e5; color: #777; letter-spacing: .1px; }
.prop-last { border: 0; padding-bottom: 1px; }
.help { position: absolute; right: 16px; bottom: 16px; width: 32px; height: 32px; border-radius: 16px; background: #1e1e1e; color: #fff; font-size: 17px; line-height: 32px; text-align: center; }

/* taskbar */
.taskbar { height: 48px; flex: none; display: flex; align-items: center; padding-bottom: 1px; border-top: 1px solid #b9b9c1; background: #e6e6f0; font: 12px "Open Sans", sans-serif; color: #222; }
.widget { width: 361px; display: flex; align-items: center; padding: 0 0 1px 19px; }
.widget-icon { position: relative; }
.widget-icon span { position: absolute; left: 11px; top: -5px; width: 16px; height: 16px; border-radius: 8px; background: #c42b1c; color: #fff; font-size: 10px; line-height: 16px; text-align: center; }
.widget-text { margin-left: 6px; display: flex; flex-direction: column; font-size: 11.500px; line-height: 16px; letter-spacing: -.3px; }
.down { color: #c42b1c; }
.start { margin-left: 1px; }
.searchbox { width: 219px; height: 32px; margin-left: 13px; padding: 0 5px 0 11px; border: 1px solid #cfcfd8; border-radius: 16px; background: #f9f9fc; display: flex; align-items: center; color: #555; font-size: 13px; letter-spacing: -.1px; }
.searchbox span { margin-left: 9px; }
.city { margin-left: auto; }
.apps { margin-left: 11px; display: flex; align-items: center; gap: 18.200px; }
.app-running, .app-active { position: relative; }
.app-running::after { content: ""; position: absolute; left: 10px; bottom: -7px; width: 6px; height: 3px; border-radius: 2px; background: #888; }
.app-active { width: 38px; height: 38px; margin-left: -7px; padding: 6px; border-radius: 4px; background: #f6f6fb; }
.app-active::after { content: ""; position: absolute; left: 11px; bottom: -1px; width: 16px; height: 3px; border-radius: 2px; background: #0067c0; }
.app-active span { position: absolute; right: 3px; top: 2px; width: 15px; height: 15px; border-radius: 8px; background: #c0330c; color: #fff; font-size: 9px; line-height: 15px; text-align: center; }
.tray { margin-left: auto; display: flex; align-items: center; padding-right: 19px; }
.wifi { margin-left: 18px; }
.sound { margin-left: 7px; }
.batt { margin-left: 9px; }
.clock { width: 74px; margin: 0 -1px 0 4px; display: flex; flex-direction: column; align-items: flex-end; font-size: 11.500px; line-height: 16px; letter-spacing: .05px; }
.bell { margin-left: 9px; }
.copilot { position: relative; margin-left: 16px; }
.copilot span { position: absolute; left: 5px; bottom: -1px; padding: 0 2px; border-radius: 2px; background: #222; color: #ffd54a; font-size: 7px; font-weight: 700; line-height: 9px; }
```
